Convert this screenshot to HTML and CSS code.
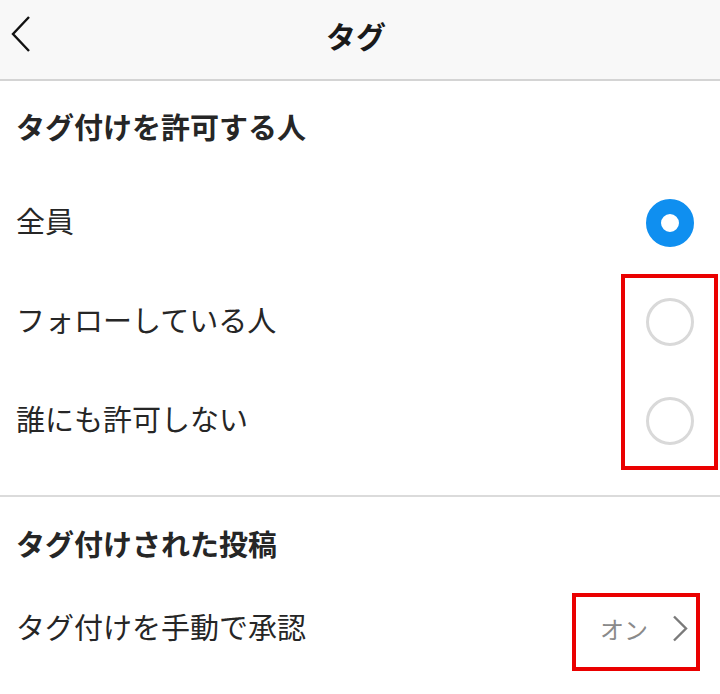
FILE: index.html
```html
<!DOCTYPE html>
<html lang="ja">
<head>
<meta charset="utf-8">
<link rel="stylesheet" href="styles.css">
</head>
<body>
<div class="page">
  <header class="topbar">
    <span class="back">
      <svg width="20" height="36" viewBox="0 0 20 36"><path d="M18 1 L2 18 L18 35" fill="none" stroke="#111" stroke-width="2.4" stroke-linejoin="miter"/></svg>
    </span>
    <h1 class="title">タグ</h1>
  </header>

  <section class="section first">
    <h2 class="heading">タグ付けを許可する人</h2>
    <div class="row"><span class="label">全員</span><span class="radio on"></span></div>
    <div class="row"><span class="label">フォローしている人</span><span class="radio"></span></div>
    <div class="row"><span class="label">誰にも許可しない</span><span class="radio"></span></div>
    <div class="mark mark-radios"></div>
  </section>

  <section class="section second">
    <h2 class="heading">タグ付けされた投稿</h2>
    <div class="row short"><span class="label">タグ付けを手動で承認</span>
      <span class="value">オン
        <svg class="chev" width="16" height="27" viewBox="0 0 16 27"><path d="M2 1.5 L14 13.5 L2 25.5" fill="none" stroke="#7a7a7a" stroke-width="2.4"/></svg>
      </span>
    </div>
    <div class="mark mark-value"></div>
  </section>
</div>
</body>
</html>
```

FILE: styles.css
```css
* { box-sizing: border-box; margin: 0; padding: 0; }
html, body { background: #fff; }
body {
  font-family: "Noto Sans CJK JP", "Noto Sans", sans-serif;
  color: #262626;
  width: 720px;
  height: 694px;
  overflow: hidden;
}
.page { position: relative; }

.topbar {
  height: 81px;
  background: #f8f8f8;
  border-bottom: 2px solid #d4d4d4;
  display: flex;
  align-items: center;
  justify-content: center;
  position: relative;
}
.back {
  position: absolute;
  left: 11px;
  top: 16px;
  display: block;
  line-height: 0;
}
.title {
  font-size: 30px;
  font-weight: 700;
  color: #1a1a1a;
  line-height: 1;
  margin-right: 8px;
  margin-top: -9px;
}

.section { position: relative; }
.section.first {
  padding-bottom: 25px;
  border-bottom: 2px solid #dbdbdb;
}
.heading {
  height: 92px;
  display: flex;
  align-items: center;
  padding-left: 16px;
  padding-bottom: 3px;
  font-size: 29px;
  font-weight: 700;
  color: #262626;
}
.second .heading { padding-bottom: 0; }

.row {
  height: 99px;
  display: flex;
  align-items: center;
  justify-content: space-between;
  padding: 0 26px 0 16px;
}
.row.short { height: 79px; padding-right: 32px; }
.label {
  font-size: 29px;
  font-weight: 400;
  color: #262626;
  padding-bottom: 6px;
}
.radio {
  width: 48px;
  height: 48px;
  border-radius: 50%;
  border: 3px solid #d9d9d9;
}
.radio.on {
  border: 15px solid #0f8ff0;
  background: #fff;
}
.value {
  display: flex;
  align-items: center;
  gap: 24px;
  font-size: 24px;
  color: #8a8a8a;
}
.chev { display: block; }

.mark {
  position: absolute;
  border: 4px solid #ea0000;
}
.mark-radios {
  left: 621px;
  top: 193px;
  width: 97px;
  height: 196px;
}
.mark-value {
  left: 572px;
  top: 96px;
  width: 128px;
  height: 78px;
}
```
